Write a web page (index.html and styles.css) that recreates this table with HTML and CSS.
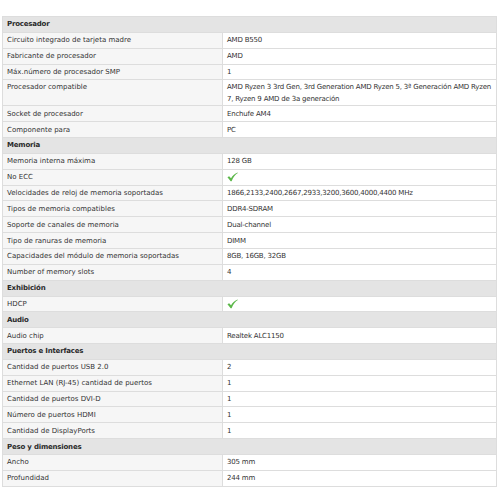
FILE: index.html
```html
<!DOCTYPE html>
<html lang="es">
<head>
<meta charset="utf-8">
<link rel="stylesheet" href="styles.css">
</head>
<body>
<table class="specs">
<colgroup><col class="c-label"><col class="c-value"></colgroup>
<tbody>
<tr class="group"><th colspan="2">Procesador</th></tr>
<tr><td>Circuito integrado de tarjeta madre</td><td>AMD B550</td></tr>
<tr><td>Fabricante de procesador</td><td>AMD</td></tr>
<tr><td>Máx.número de procesador SMP</td><td>1</td></tr>
<tr class="tall"><td>Procesador compatible</td><td>AMD Ryzen 3 3rd Gen, 3rd Generation AMD Ryzen 5, 3ª Generación AMD Ryzen 7, Ryzen 9 AMD de 3a generación</td></tr>
<tr><td>Socket de procesador</td><td>Enchufe AM4</td></tr>
<tr><td>Componente para</td><td>PC</td></tr>
<tr class="group"><th colspan="2">Memoria</th></tr>
<tr><td>Memoria interna máxima</td><td>128 GB</td></tr>
<tr><td>No ECC</td><td><svg class="check" viewBox="0 0 12 10" width="11" height="10"><path d="M0.5 5.2 L2.3 4.1 L4.4 6.4 C6.2 3.6 8.6 1.4 11.6 0.2 L11.8 0.7 C9.2 2.3 7 4.8 5 9.6 L4 9.6 Z" fill="#5cb84a"/></svg></td></tr>
<tr><td>Velocidades de reloj de memoria soportadas</td><td>1866,2133,2400,2667,2933,3200,3600,4000,4400 MHz</td></tr>
<tr><td>Tipos de memoria compatibles</td><td>DDR4-SDRAM</td></tr>
<tr><td>Soporte de canales de memoria</td><td>Dual-channel</td></tr>
<tr><td>Tipo de ranuras de memoria</td><td>DIMM</td></tr>
<tr><td>Capacidades del módulo de memoria soportadas</td><td>8GB, 16GB, 32GB</td></tr>
<tr><td>Number of memory slots</td><td>4</td></tr>
<tr class="group"><th colspan="2">Exhibición</th></tr>
<tr><td>HDCP</td><td><svg class="check" viewBox="0 0 12 10" width="11" height="10"><path d="M0.5 5.2 L2.3 4.1 L4.4 6.4 C6.2 3.6 8.6 1.4 11.6 0.2 L11.8 0.7 C9.2 2.3 7 4.8 5 9.6 L4 9.6 Z" fill="#5cb84a"/></svg></td></tr>
<tr class="group"><th colspan="2">Audio</th></tr>
<tr><td>Audio chip</td><td>Realtek ALC1150</td></tr>
<tr class="group"><th colspan="2">Puertos e Interfaces</th></tr>
<tr><td>Cantidad de puertos USB 2.0</td><td>2</td></tr>
<tr><td>Ethernet LAN (RJ-45) cantidad de puertos</td><td>1</td></tr>
<tr><td>Cantidad de puertos DVI-D</td><td>1</td></tr>
<tr><td>Número de puertos HDMI</td><td>1</td></tr>
<tr><td>Cantidad de DisplayPorts</td><td>1</td></tr>
<tr class="group"><th colspan="2">Peso y dimensiones</th></tr>
<tr><td>Ancho</td><td>305 mm</td></tr>
<tr><td>Profundidad</td><td>244 mm</td></tr>
</tbody>
</table>
</body>
</html>
```
FILE: styles.css
```css
html, body {
  margin: 0;
  padding: 0;
  background: #ffffff;
}
body {
  padding: 16px 3px 0 2px;
  font-family: "DejaVu Sans", Verdana, sans-serif;
  font-size: 7px;
  color: #333333;
}
.specs {
  width: 495px;
  border-collapse: collapse;
  table-layout: fixed;
}
.c-label { width: 220px; }
.specs tr {
  height: 15.85px;
}
.specs tr.tall {
  height: 26px;
}
.specs td,
.specs th {
  border: 1px solid #dddddd;
  padding: 0 4px;
  line-height: 12px;
  vertical-align: middle;
  text-align: left;
}
.specs tr.tall td {
  vertical-align: top;
  padding-top: 1px;
}
.specs td:first-child {
  background: #f6f6f6;
}
.specs td:last-child {
  background: #ffffff;
  letter-spacing: -0.2px;
}
.specs .group th {
  background: #e4e4e4;
  font-weight: bold;
  color: #2a2a2a;
  letter-spacing: -0.2px;
}
.check {
  display: block;
}
```
